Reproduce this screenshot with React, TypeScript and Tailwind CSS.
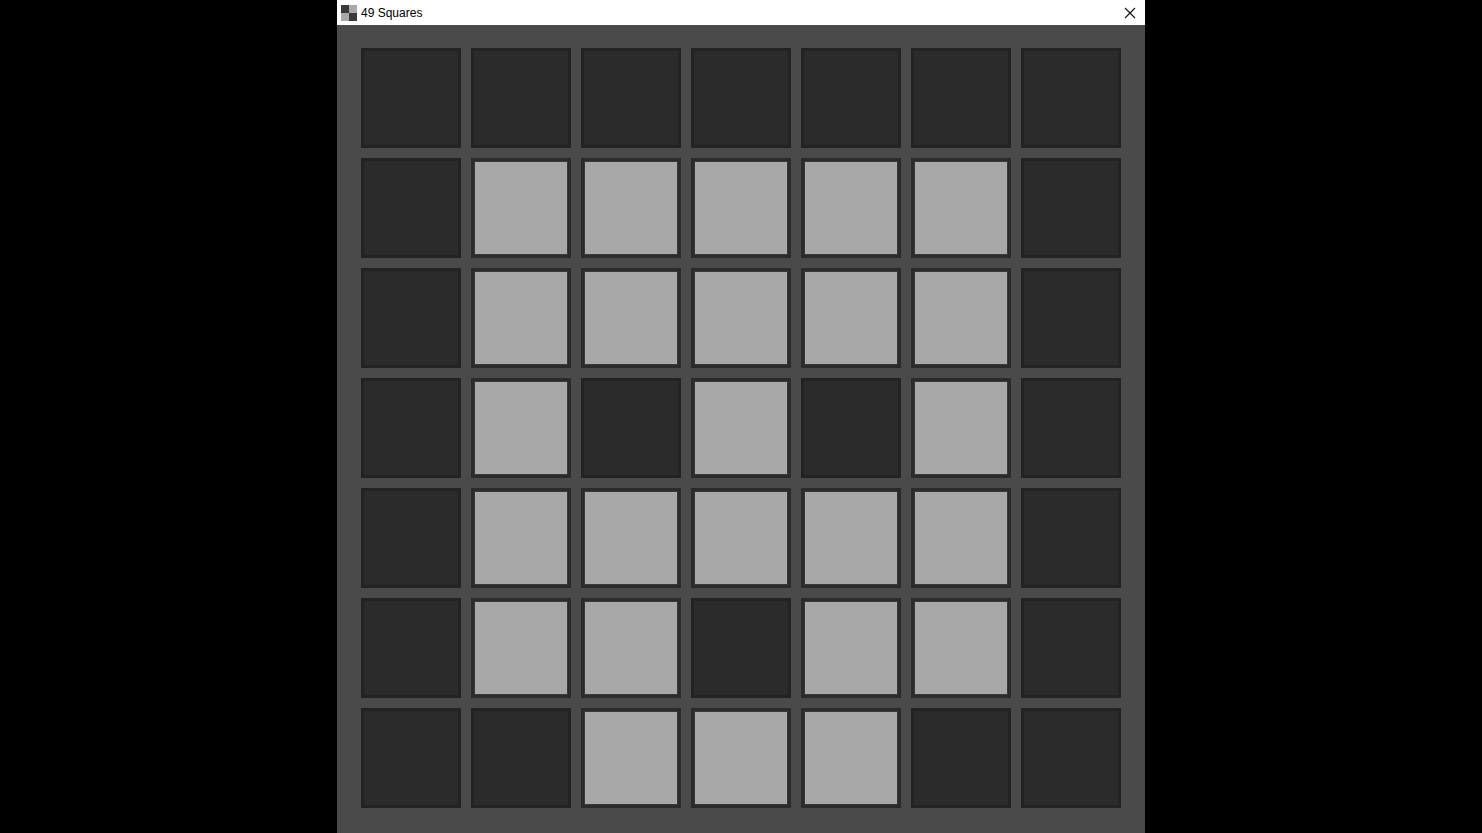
const grid = [
  "0000000",
  "0111110",
  "0111110",
  "0101010",
  "0111110",
  "0110110",
  "0011100",
];

function TitleIcon() {
  return (
    <svg width="16" height="16" viewBox="0 0 16 16">
      <rect x="0" y="0" width="8" height="8" fill="#3a3a3a" />
      <rect x="8" y="0" width="8" height="8" fill="#a8a8a8" />
      <rect x="0" y="8" width="8" height="8" fill="#a8a8a8" />
      <rect x="8" y="8" width="8" height="8" fill="#3a3a3a" />
    </svg>
  );
}

export default function App() {
  return (
    <div className="w-[1482px] h-[833px] bg-black flex justify-center overflow-hidden">
      <div className="w-[808px] h-[833px] flex flex-col bg-[#4a4a4a]">
        {/* Title bar */}
        <div className="h-[25px] bg-white flex items-center pl-[4px] shrink-0">
          <TitleIcon />
          <span className="ml-[4px] text-[12px] text-black leading-none font-['Liberation_Sans',sans-serif]">
            49 Squares
          </span>
          <div className="ml-auto w-[30px] h-[25px] flex items-center justify-center">
            <svg width="12" height="12" viewBox="0 0 12 12">
              <path d="M1 1 L11 11 M11 1 L1 11" stroke="#111" strokeWidth="1.1" />
            </svg>
          </div>
        </div>

        {/* Board */}
        <div className="flex-1 flex justify-center items-start pt-[23px]">
          <div className="grid grid-cols-7 gap-[10px] content-start">
            {grid.flatMap((row, r) =>
              row.split("").map((c, i) =>
                c === "1" ? (
                  <div
                    key={`${r}-${i}`}
                    className="w-[100px] h-[100px] border-[3px] border-[#2b2b2b] bg-[#a8a8a8] shadow-[inset_0_0_0_1px_#383838]"
                  />
                ) : (
                  <div
                    key={`${r}-${i}`}
                    className="w-[100px] h-[100px] border-[3px] border-[#232323] bg-[#2b2b2b]"
                  />
                )
              )
            )}
          </div>
        </div>
      </div>
    </div>
  );
}
